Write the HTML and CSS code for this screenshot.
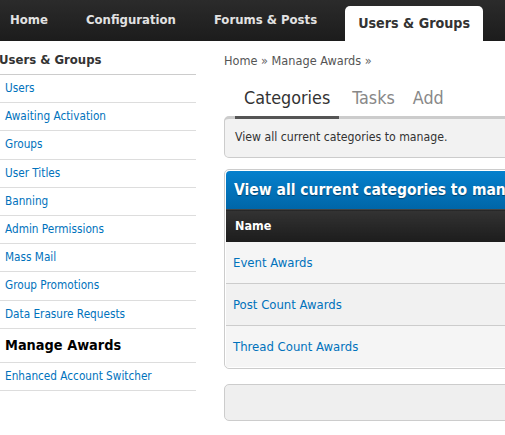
FILE: index.html
```html
<!DOCTYPE html>
<html lang="en">
<head>
    <meta charset="UTF-8" />
    <title>Manage Awards</title>
    <link rel="stylesheet" href="styles.css">
</head>
<body>
    <div class="header">
        <ul class="menu">
            <li><a href="#">Home</a></li>
            <li><a href="#">Configuration</a></li>
            <li><a href="#">Forums &amp; Posts</a></li>
            <li class="active"><a href="#">Users &amp; Groups</a></li>
        </ul>
    </div>

    <div class="page">
        <div class="sidebar">
            <div class="side-title">Users &amp; Groups</div>
            <ul class="side-menu">
                <li><a href="#">Users</a></li>
                <li><a href="#">Awaiting Activation</a></li>
                <li><a href="#">Groups</a></li>
                <li><a href="#">User Titles</a></li>
                <li><a href="#">Banning</a></li>
                <li><a href="#">Admin Permissions</a></li>
                <li><a href="#">Mass Mail</a></li>
                <li><a href="#">Group Promotions</a></li>
                <li><a href="#">Data Erasure Requests</a></li>
                <li class="current"><a href="#">Manage Awards</a></li>
                <li><a href="#">Enhanced Account Switcher</a></li>
            </ul>
        </div>

        <div class="content">
            <div class="breadcrumb"><a href="#">Home</a> &raquo; <a href="#">Manage Awards</a> &raquo;</div>

            <ul class="tabs">
                <li class="active"><a href="#">Categories</a></li>
                <li><a href="#">Tasks</a></li>
                <li><a href="#">Add</a></li>
            </ul>
            <div class="tab-desc">View all current categories to manage.</div>

            <div class="border-wrapper">
                <div class="title">View all current categories to manage.</div>
                <table class="general">
                    <thead>
                        <tr><th>Name</th></tr>
                    </thead>
                    <tbody>
                        <tr><td><a href="#">Event Awards</a></td></tr>
                        <tr class="alt"><td><a href="#">Post Count Awards</a></td></tr>
                        <tr><td><a href="#">Thread Count Awards</a></td></tr>
                    </tbody>
                </table>
            </div>

            <div class="buttons"></div>
        </div>
    </div>
</body>
</html>
```

FILE: styles.css
```css
html {
    overflow: hidden;
}

body {
    margin: 0;
    font-family: "DejaVu Sans Condensed", "DejaVu Sans", sans-serif;
    font-stretch: condensed;
    font-size: 12px;
    color: #333;
    background: #fff;
}

a {
    color: #0072bc;
    text-decoration: none;
}

ul {
    list-style: none;
    margin: 0;
    padding: 0;
}

/* top menu */

.header {
    height: 41px;
    background: linear-gradient(to bottom, #2b2b2b, #1c1c1c);
}

.menu {
    display: flex;
    align-items: flex-end;
    height: 41px;
    margin-left: -9px;
}

.menu li {
    padding: 0 19px;
    line-height: 41px;
}

.menu li a {
    color: #e2e2e2;
    font-weight: bold;
    font-size: 13px;
}

.menu li.active {
    margin-left: 9px;
    padding: 0 13px;
    height: 35px;
    line-height: 35px;
    background: #fff;
    border-radius: 5px 5px 0 0;
}

.menu li.active a {
    color: #333;
    font-size: 14.2px;
}

/* page */

.page {
    display: flex;
    align-items: flex-start;
}

.sidebar {
    width: 196px;
    flex: none;
}

.side-title {
    margin-left: -1px;
    padding: 11px 0 6px;
    line-height: 16px;
    font-size: 13px;
    font-weight: bold;
    color: #333;
    border-bottom: 1px solid #ccc;
}

.side-menu li {
    padding: 6px 5px 6.2px;
    line-height: 15px;
    font-size: 11.7px;
    border-bottom: 1px solid #ddd;
}

.side-menu li.current {
    padding: 7px 5px 6px;
    line-height: 19px;
}

.side-menu li.current a {
    color: #000;
    font-size: 14.4px;
    font-weight: bold;
}

.content {
    width: 640px;
    flex: none;
    margin-left: 28px;
}

.breadcrumb {
    padding-top: 12px;
    line-height: 15px;
    font-size: 12.6px;
    color: #666;
}

.breadcrumb a {
    color: #555;
}

/* tabs */

.tabs {
    display: flex;
    margin: 11px 0 -3px;
    padding-left: 11px;
    position: relative;
    z-index: 1;
}

.tabs li {
    margin-right: 0;
    padding: 8px 9px 7px;
    line-height: 22px;
    font-size: 17.8px;
    border-bottom: 3px solid transparent;
}

.tabs li a {
    color: #888;
}

.tabs li.active {
    margin-right: 4px;
    border-bottom-color: #555;
}

.tabs li.active a {
    color: #333;
}

.tab-desc {
    padding: 11px 10px 12px;
    line-height: 15px;
    font-size: 12.2px;
    background: #f2f2f2;
    border: 1px solid #ccc;
    border-top-width: 3px;
    border-radius: 5px;
}

/* table */

.border-wrapper {
    margin-top: 11px;
    padding: 1px;
    border: 1px solid #ccc;
    border-radius: 5px;
    overflow: hidden;
}

.title {
    padding: 9px 8px;
    line-height: 20px;
    font-size: 15.5px;
    font-weight: bold;
    color: #fff;
    text-shadow: 0 1px 1px rgba(0, 0, 0, 0.4);
    background: linear-gradient(to bottom, #0580cd, #0066a8);
    border-radius: 4px 4px 0 0;
}

table.general {
    width: 100%;
    border-collapse: collapse;
}

.general th {
    padding: 8px 9px;
    line-height: 16px;
    text-align: left;
    font-size: 12.5px;
    font-weight: bold;
    color: #fff;
    background: linear-gradient(to bottom, #333, #1c1c1c);
    border-top: 1px solid #444;
}

.general td {
    padding: 13px 7px;
    line-height: 15px;
    font-size: 13px;
    background: #f5f5f5;
    border-bottom: 1px solid #ccc;
}

.general tr.alt td {
    background: #f1f1f1;
}

.general tr:last-child td {
    border-bottom: 0;
}

.buttons {
    margin-top: 15px;
    height: 35px;
    background: #efefef;
    border: 1px solid #ccc;
    border-radius: 5px;
}
```
